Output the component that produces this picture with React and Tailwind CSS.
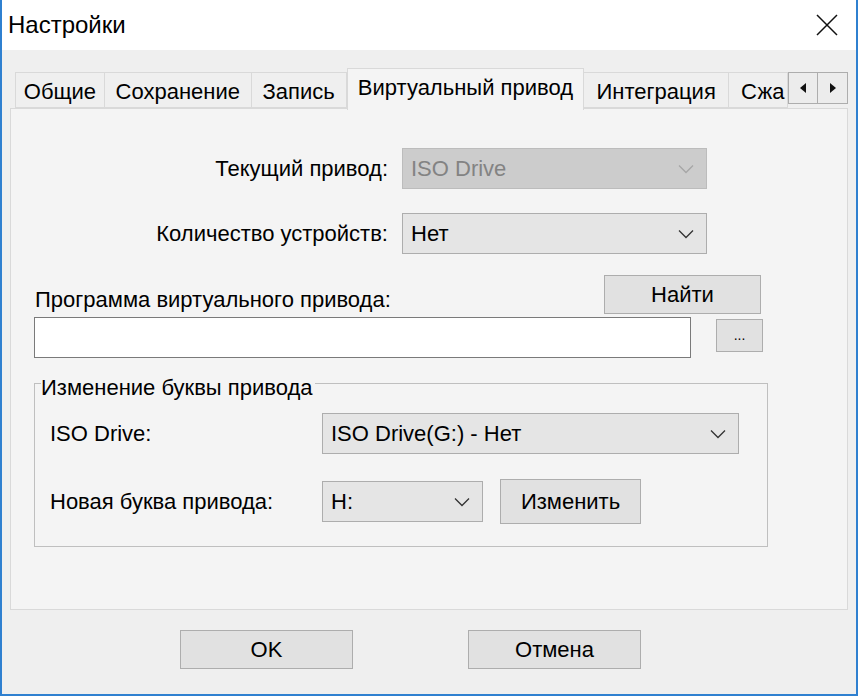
import React from 'react';

const font = { fontFamily: '"Liberation Sans", Arial, sans-serif' };

function Chevron({ color = '#333' }) {
  return (
    <svg width="16" height="10" viewBox="0 0 16 10" className="shrink-0">
      <polyline points="1,1.5 8,8.5 15,1.5" fill="none" stroke={color} strokeWidth="1.3" />
    </svg>
  );
}

function Combo({ value, width, disabled }) {
  return (
    <div
      className={
        'flex items-center justify-between h-[41px] pl-[8px] pr-[12px] border ' +
        (disabled ? 'bg-[#cccccc] border-[#bcbcbc] text-[#838383]' : 'bg-[#e5e5e5] border-[#adadad] text-black')
      }
      style={{ width }}
    >
      <span className="whitespace-nowrap">{value}</span>
      <Chevron color={disabled ? '#a6a6a6' : '#333'} />
    </div>
  );
}

function Button({ children, className = '' }) {
  return (
    <div className={'flex items-center justify-center bg-[#e1e1e1] border border-[#adadad] text-black ' + className}>
      {children}
    </div>
  );
}

const tabs = [
  { label: 'Общие', w: 'w-[90px]' },
  { label: 'Сохранение', w: 'w-[147px]' },
  { label: 'Запись', w: 'w-[95px]' },
  { label: 'Виртуальный привод', w: 'w-[238px]', active: true },
  { label: 'Интеграция', w: 'w-[145px]' },
];

export default function App() {
  return (
    <div className="w-[858px] h-[696px] flex flex-col bg-[#efefef] border-x-2 border-b-2 border-[#2f80d0] text-[22px] overflow-hidden" style={font}>
      {/* title bar */}
      <div className="h-[50px] bg-white flex items-center justify-between pl-[6px] pr-[18px] shrink-0">
        <span className="text-[24px] text-black">Настройки</span>
        <svg width="22" height="22" viewBox="0 0 22 22">
          <path d="M1 1 L21 21 M21 1 L1 21" stroke="#111" strokeWidth="1.5" />
        </svg>
      </div>

      <div className="px-[8px] pt-[18px] flex flex-col flex-1">
        {/* tab strip */}
        <div className="flex items-end h-[40px] pl-[5px] relative z-10 whitespace-nowrap">
          {tabs.map(t =>
            t.active ? (
              <div key={t.label} className={t.w + ' h-[42px] -mb-[2px] bg-[#f4f4f4] border border-b-0 border-[#d9d9d9] flex items-center justify-center pb-[4px]'}>
                {t.label}
              </div>
            ) : (
              <div key={t.label} className={t.w + ' h-[36px] bg-[#efefef] border border-[#d9d9d9] border-l-0 first:border-l flex items-center justify-center pt-[2px]'}>
                {t.label}
              </div>
            )
          )}
          <div className="w-[59px] h-[36px] bg-[#efefef] border border-[#d9d9d9] border-l-0 flex items-center pl-[12px] pt-[2px]">
            Сжа
          </div>
          <div className="flex self-start mt-[4px]">
            <div className="w-[30px] h-[32px] bg-[#ececec] border border-[#adadad] flex items-center justify-center">
              <svg width="6" height="10" viewBox="0 0 6 10"><polygon points="6,0 0,5 6,10" fill="#111" /></svg>
            </div>
            <div className="w-[30px] h-[32px] bg-[#ececec] border border-[#adadad] border-l-0 flex items-center justify-center">
              <svg width="6" height="10" viewBox="0 0 6 10"><polygon points="0,0 6,5 0,10" fill="#111" /></svg>
            </div>
          </div>
        </div>

        {/* tab panel */}
        <div className="w-[838px] h-[502px] bg-[#f4f4f4] border border-[#d9d9d9] flex flex-col pt-[39px] pl-[23px]">
          <div className="flex items-center">
            <div className="w-[368px] text-right pr-[14px]">Текущий привод:</div>
            <Combo value="ISO Drive" width="305px" disabled />
          </div>
          <div className="flex items-center mt-[24px]">
            <div className="w-[368px] text-right pr-[14px]">Количество устройств:</div>
            <Combo value="Нет" width="305px" />
          </div>
          <div className="flex items-center mt-[21px] h-[39px]">
            <div className="w-[570px] pl-[1px] pt-[9px]">Программа виртуального привода:</div>
            <Button className="w-[157px] h-[39px]">Найти</Button>
          </div>
          <div className="flex items-start mt-[3px]">
            <div className="w-[657px] h-[41px] bg-white border border-[#7a7a7a]" />
            <Button className="w-[47px] h-[33px] ml-[25px] mt-[2px] text-[14px] text-[#555]">...</Button>
          </div>

          {/* group box */}
          <div className="relative w-[734px] h-[164px] mt-[25px] border border-[#bfbfbf] px-[15px] pt-[29px]">
            <span className="absolute left-[6px] -top-[8px] bg-[#f4f4f4] leading-[24px] pr-[2px]">Изменение буквы привода</span>
            <div className="flex items-center">
              <div className="w-[272px]">ISO Drive:</div>
              <Combo value="ISO Drive(G:) - Нет" width="417px" />
            </div>
            <div className="flex items-center mt-[25px]">
              <div className="w-[272px]">Новая буква привода:</div>
              <Combo value="H:" width="161px" />
              <Button className="w-[141px] h-[45px] ml-[17px]">Изменить</Button>
            </div>
          </div>
        </div>

        {/* bottom buttons */}
        <div className="flex mt-[20px] pl-[170px]">
          <Button className="w-[173px] h-[39px]">OK</Button>
          <Button className="w-[173px] h-[39px] ml-[115px]">Отмена</Button>
        </div>
      </div>
    </div>
  );
}
